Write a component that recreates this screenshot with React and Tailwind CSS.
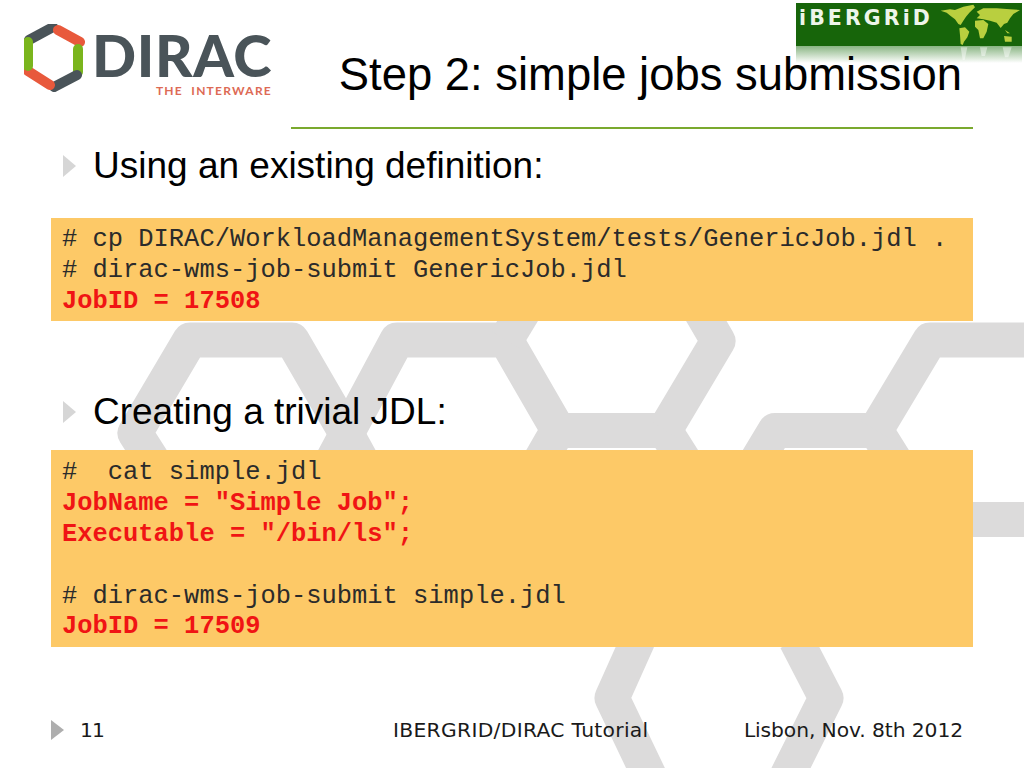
import React from "react";

function Backdrop() {
  return (
    <svg className="absolute inset-0" width="1024" height="768" viewBox="0 0 1024 768" fill="none">
      <g stroke="#dcdbdb" strokeWidth="35" strokeLinejoin="round" strokeLinecap="butt">
        <path d="M165 480L135 433L190 340H292L350 440L372 480" />
        <path d="M322 480L397 340H506L558 430L535 470" />
        <path d="M526 307L506 340" />
        <path d="M558 430.500H665L690 470" />
        <path d="M697 305L718 341L665 430" />
        <path d="M750 472L775 430.500H876L902 472" />
        <path d="M876 430L930 340H1040" />
        <path d="M960 519.500H1040" />
        <path d="M638 640L612 698L656 790" />
        <path d="M796 640L826 698L780 790" />
      </g>
    </svg>
  );
}

function DiracLogo() {
  return (
    <div className="flex items-start pl-[24px] pt-[24px] w-[291px]">
      <svg width="62" height="68" viewBox="24 22 62 68" fill="none" className="shrink-0" strokeWidth="10" strokeLinecap="round">
        <path d="M29 38L53 25" stroke="#4a5459" />
        <path d="M58 28L80 40" stroke="#e8593c" />
        <path d="M78 47V70" stroke="#7ab51d" />
        <path d="M77 73L54 85" stroke="#4a5459" />
        <path d="M50 83L28 69" stroke="#e8593c" />
        <path d="M28 40V64" stroke="#7ab51d" />
      </svg>
      <div className="ml-[7px] flex flex-col items-end w-[179px]">
        <div className="font-['Lato',sans-serif] font-black text-[58px] leading-[50px] tracking-[0.600px] text-[#4a5459] mt-[6px]">DIRAC</div>
        <div className="font-['Lato',sans-serif] font-bold text-[12px] leading-[14px] tracking-[1.250px] text-[#dd6a55] mt-[4px] whitespace-pre">THE  INTERWARE</div>
      </div>
    </div>
  );
}

function IbergridLogo() {
  return (
    <div className="absolute left-[796px] top-[3px] w-[226px] h-[60px]">
      <div className="h-[43px] bg-[#17650a] overflow-hidden pl-[3px] pt-[2px] font-['DejaVu_Sans',sans-serif] font-bold text-[20.500px] leading-[26px] tracking-[3.100px] text-[#eef5ea]">iBERGRiD</div>
      <div className="h-[17px] bg-gradient-to-b from-[#8ab584] to-white"></div>
      <svg className="absolute left-[134px] top-[-3px]" width="94" height="66" viewBox="0 0 282 198" fill="#b9cf3f">
        <path d="M32 32L60 28L75 30L100 20L130 14L135 22L118 38L108 50L100 62L92 75L85 72L75 58L62 48L50 38Z" />
        <path d="M88 85L105 82L118 95L112 112L102 125L98 135L92 132L90 105Z" />
        <path d="M140 35L160 25L200 25L240 28L270 30L250 42L240 55L232 68L222 72L212 84L200 68L180 62L160 58L140 55L150 45Z" />
        <path d="M135 62L160 60L175 72L170 95L160 115L150 115L145 90L135 80Z" />
        <path d="M222 108L245 110L245 125L225 125Z" />
        <path d="M225 90L240 100L232 100Z" />
        <g fill="#ffffff" fillOpacity="0.45">
          <path d="M92 142H112L104 180H98Z" />
          <path d="M150 142H172L165 168H155Z" />
          <path d="M218 142H245L235 172H225Z" />
        </g>
      </svg>
    </div>
  );
}

function Bullet() {
  return (
    <svg width="13" height="22" viewBox="0 0 13 22" className="shrink-0">
      <path d="M0 0L13 11L0 22Z" fill="#d6d6d6" />
    </svg>
  );
}

function Heading({ children }) {
  return (
    <div className="flex items-center pl-[12px] h-[44px]">
      <Bullet />
      <span className="ml-[17px] font-['Liberation_Sans',sans-serif] text-[37px] leading-[44px] text-black">{children}</span>
    </div>
  );
}

function Code({ lines, top }) {
  return (
    <div className={top ? "bg-[#fdc967] pl-[11px] pt-[8px] pb-[4px] font-['Liberation_Mono',monospace] text-[25.450px] leading-[30.800px] whitespace-pre" : "bg-[#fdc967] pl-[11px] pt-[7px] pb-[4px] font-['Liberation_Mono',monospace] text-[25.450px] leading-[30.800px] whitespace-pre"}>
      {lines.map((l, i) =>
        <div key={i} className={l.red ? "font-bold text-[#f01414] h-[30.800px]" : "text-[#2b2b2b] h-[30.800px]"}>{l.t}</div>
      )}
    </div>
  );
}

export default function App() {
  return (
    <div className="relative w-[1024px] h-[768px] overflow-hidden bg-white">
      <Backdrop />
      <IbergridLogo />
      <div className="relative flex h-[127px]">
        <DiracLogo />
        <div className="flex-1 pr-[62px] pt-[48px] text-right font-['Liberation_Sans',sans-serif] text-[45.400px] leading-[54px] text-black whitespace-nowrap">Step 2: simple jobs submission</div>
      </div>
      <div className="relative ml-[291px] w-[682px] h-[2px] bg-[#7aa92e]"></div>
      <div className="relative w-[922px] ml-[51px]">
        <div className="pt-[15px]"><Heading>Using an existing definition:</Heading></div>
        <div className="mt-[30px]">
          <Code lines={[
            { t: "# cp DIRAC/WorkloadManagementSystem/tests/GenericJob.jdl ." },
            { t: "# dirac-wms-job-submit GenericJob.jdl" },
            { t: "JobID = 17508", red: true },
          ]} />
        </div>
        <div className="mt-[69px]"><Heading>Creating a trivial JDL:</Heading></div>
        <div className="mt-[16px]">
          <Code top lines={[
            { t: "#  cat simple.jdl" },
            { t: "JobName = \"Simple Job\";", red: true },
            { t: "Executable = \"/bin/ls\";", red: true },
            { t: " " },
            { t: "# dirac-wms-job-submit simple.jdl" },
            { t: "JobID = 17509", red: true },
          ]} />
        </div>
        <div className="mt-[71px] flex items-center h-[24px] font-['DejaVu_Sans',sans-serif] text-[20.300px] leading-[24px] text-[#1a1a1a] whitespace-nowrap">
          <svg width="13" height="20" viewBox="0 0 13 20" className="shrink-0"><path d="M0 0L13 10L0 20Z" fill="#aeaeae" /></svg>
          <span className="ml-[16px] w-[313px] tracking-[-1px]">11</span>
          <span className="tracking-[0.300px]">IBERGRID/DIRAC Tutorial</span>
          <span className="ml-auto mr-[10px] tracking-[-0.100px]">Lisbon, Nov. 8th 2012</span>
        </div>
      </div>
    </div>
  );
}
